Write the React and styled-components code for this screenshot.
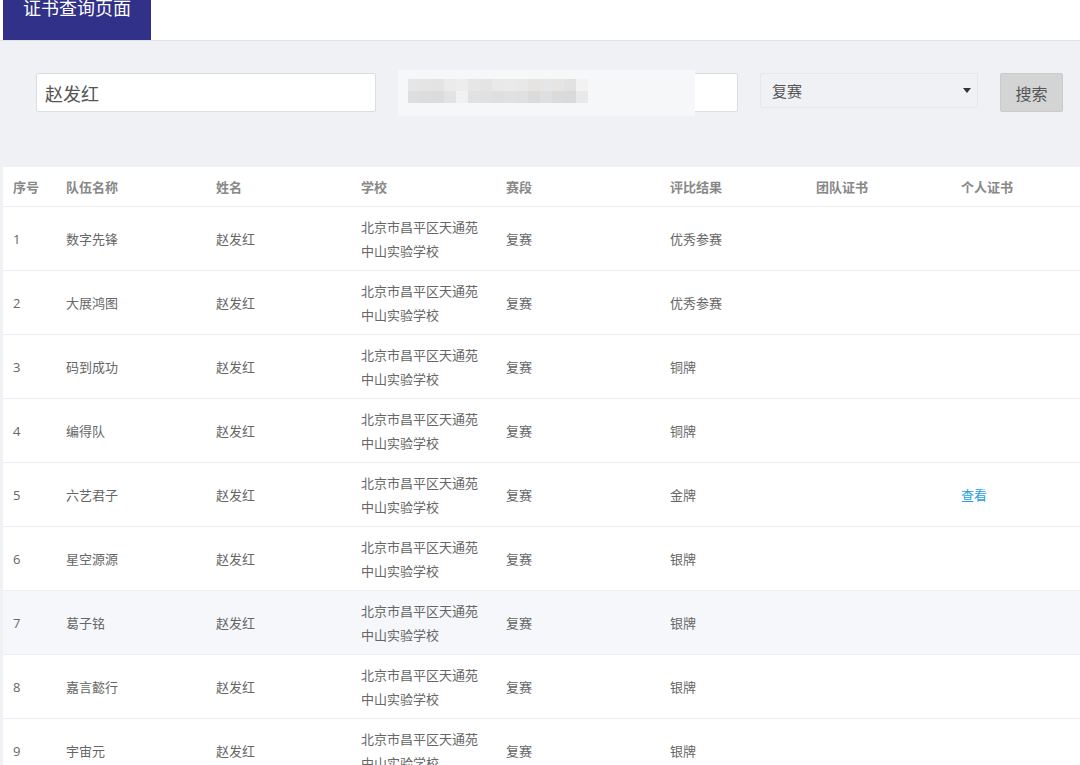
import React from 'react';
import styled, { createGlobalStyle } from 'styled-components';

const GlobalStyle = createGlobalStyle`
  html, body {
    margin: 0;
    padding: 0;
    background: #ffffff;
    font-family: "Open Sans", "Noto Sans CJK SC", sans-serif;
    overflow: hidden;
  }
`;

const rows = [
  { no: 1, team: '数字先锋', result: '优秀参赛' },
  { no: 2, team: '大展鸿图', result: '优秀参赛' },
  { no: 3, team: '码到成功', result: '铜牌' },
  { no: 4, team: '编得队', result: '铜牌' },
  { no: 5, team: '六艺君子', result: '金牌', personal: true },
  { no: 6, team: '星空源源', result: '银牌' },
  { no: 7, team: '葛子铭', result: '银牌', hover: true },
  { no: 8, team: '嘉言懿行', result: '银牌' },
  { no: 9, team: '宇宙元', result: '银牌' },
];

const cols = [53, 150, 145, 145, 164, 146, 145, 129];
const heads = ['序号', '队伍名称', '姓名', '学校', '赛段', '评比结果', '团队证书', '个人证书'];

// mosaic colours for the blurred field, two rows of cells
const mosaicTop = ['#e6e6e6', '#e4e4e4', '#e3e3e3', '#ebebeb', '#ededed', '#e6e6e6', '#e4e4e4', '#e9e9e9', '#ebeae9', '#e8e8e8', '#e5e4e2', '#e6e6e6', '#e6e5e3', '#e2e2e2', '#f2f2f2'];
const mosaicBot = ['#dedede', '#dddddd', '#dcdcdc', '#e3e3e3', '#f1f1f1', '#e2e2e2', '#e1e1e1', '#dfdfdf', '#e1e1e1', '#e0e0e0', '#dbdbdb', '#dedfe0', '#dcdbd9', '#d9dadb', '#e9e9e9'];

export default function App() {
  return (
    <>
      <GlobalStyle />
      <Page>
        <TopBar>
          <TitleBlock>证书查询页面</TitleBlock>
        </TopBar>
        <SearchArea>
          <Field value="赵发红" readOnly />
          <BlurWrap>
            <Field value="" readOnly />
            <Mosaic>
              <MosaicRow>
                {mosaicTop.map((c, i) => <Cell key={i} $c={c} />)}
              </MosaicRow>
              <MosaicRow>
                {mosaicBot.map((c, i) => <Cell key={i} $c={c} />)}
              </MosaicRow>
            </Mosaic>
          </BlurWrap>
          <SelectBox>
            <span>复赛</span>
            <Caret />
          </SelectBox>
          <SearchBtn>搜索</SearchBtn>
        </SearchArea>
        <Table>
          <colgroup>
            {cols.map((w, i) => <col key={i} style={{ width: w }} />)}
          </colgroup>
          <thead>
            <tr>
              {heads.map(h => <Th key={h}>{h}</Th>)}
            </tr>
          </thead>
          <tbody>
            {rows.map(r => (
              <Tr key={r.no} $hover={r.hover}>
                <Td>{r.no}</Td>
                <Td>{r.team}</Td>
                <Td>赵发红</Td>
                <Td>北京市昌平区天通苑<br />中山实验学校</Td>
                <Td>复赛</Td>
                <Td>{r.result}</Td>
                <Td></Td>
                <Td>{r.personal ? <Link>查看</Link> : null}</Td>
              </Tr>
            ))}
          </tbody>
        </Table>
      </Page>
    </>
  );
}

const Page = styled.div`
  width: 1080px;
  height: 765px;
  overflow: hidden;
  background: #f0f1f5;
`;

const TopBar = styled.div`
  height: 40px;
  background: #ffffff;
  border-bottom: 1px solid #e2e3e7;
  padding-left: 3px;
  display: flex;
`;

// title sits scrolled up against the top edge, as in the page
const TitleBlock = styled.div`
  width: 148px;
  height: 40px;
  background: #31318a;
  color: #ffffff;
  font-size: 18px;
  line-height: 16px;
  text-align: center;
  overflow: hidden;
`;

const SearchArea = styled.div`
  height: 126px;
  display: flex;
  align-items: flex-start;
  padding: 32px 0 0 36px;
  box-sizing: border-box;
`;

const Field = styled.input`
  width: 340px;
  height: 39px;
  box-sizing: border-box;
  border: 1px solid #dcdde1;
  border-radius: 2px;
  background: #ffffff;
  padding: 0 8px;
  font-family: "Open Sans", "Noto Sans CJK SC", sans-serif;
  font-size: 18px;
  color: #555555;
  outline: none;
`;

const BlurWrap = styled.div`
  position: relative;
  margin-left: 22px;
`;

const Mosaic = styled.div`
  position: absolute;
  left: 0;
  top: -3px;
  width: 297px;
  height: 46px;
  background: #f6f7f9;
  padding: 9px 0 0 10px;
  box-sizing: border-box;
  display: flex;
  flex-direction: column;
`;

const MosaicRow = styled.div`
  display: flex;
`;

const Cell = styled.div`
  width: 12px;
  height: 12px;
  background: ${p => p.$c};
`;

const SelectBox = styled.div`
  width: 218px;
  height: 35px;
  margin-left: 22px;
  box-sizing: border-box;
  border: 1px solid #e6e7eb;
  border-radius: 2px;
  background: #f0f1f5;
  display: flex;
  align-items: center;
  justify-content: space-between;
  padding: 0 6px 0 11px;
  font-size: 15px;
  color: #555555;
`;

const Caret = styled.span`
  width: 0;
  height: 0;
  border-left: 4px solid transparent;
  border-right: 4px solid transparent;
  border-top: 5px solid #333333;
`;

const SearchBtn = styled.button`
  width: 63px;
  height: 39px;
  margin-left: 22px;
  border: 1px solid #cacaca;
  border-radius: 2px;
  background: #d4d4d4;
  color: #555555;
  font-family: "Open Sans", "Noto Sans CJK SC", sans-serif;
  font-size: 16px;
  padding: 0;
`;

const Table = styled.table`
  margin-left: 3px;
  width: 1077px;
  border-collapse: collapse;
  table-layout: fixed;
  background: #ffffff;
  font-size: 13px;
`;

const Th = styled.th`
  height: 39px;
  padding: 0 10px;
  text-align: left;
  font-weight: 700;
  color: #888888;
  border-bottom: 1px solid #eceef2;
  white-space: nowrap;
`;

const Tr = styled.tr`
  background: ${p => (p.$hover ? '#f5f7fa' : '#ffffff')};
`;

const Td = styled.td`
  height: 63px;
  padding: 0 10px;
  color: #666666;
  line-height: 24px;
  border-bottom: 1px solid #eceef2;
  white-space: nowrap;
`;

const Link = styled.span`
  color: #1e9fe0;
`;
